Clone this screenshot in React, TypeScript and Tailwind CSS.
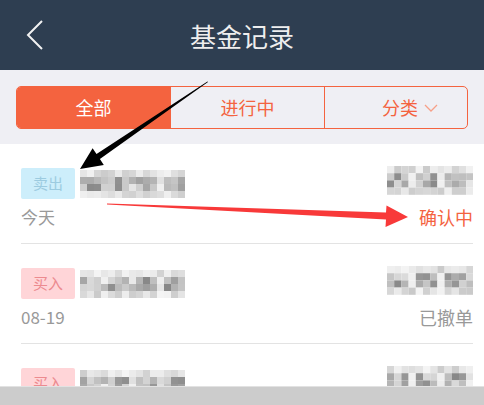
import React from 'react';

const font = { fontFamily: '"Noto Sans CJK SC", "Noto Sans", sans-serif' };

// simple seeded generator so the mosaic looks the same on every render
function makeRand(seed: number) {
  let s = seed;
  return () => {
    s = (s * 9301 + 49297) % 233280;
    return s / 233280;
  };
}

function Mosaic({ cols, rows, seed, cell = 7 }: { cols: number; rows: number; seed: number; cell?: number }) {
  const rand = makeRand(seed);
  const cells = [];
  for (let r = 0; r < rows; r++) {
    for (let c = 0; c < cols; c++) {
      const edge = r === 0 || r === rows - 1;
      const v = rand();
      let g = edge ? 200 + Math.floor(v * 45) : 135 + Math.floor(v * 85);
      if (c % 4 === 3 && !edge) g = Math.min(240, g + 40);
      cells.push(
        <rect key={`${r}-${c}`} x={c * cell} y={r * cell} width={cell} height={cell} fill={`rgb(${g},${g},${g})`} />
      );
    }
  }
  return (
    <svg width={cols * cell} height={rows * cell} className="block shrink-0">
      {cells}
    </svg>
  );
}

interface Record {
  type: 'sell' | 'buy';
  date: string;
  status: string;
  active?: boolean;
  seed: number;
}

const records: Record[] = [
  { type: 'sell', date: '今天', status: '确认中', active: true, seed: 11 },
  { type: 'buy', date: '08-19', status: '已撤单', seed: 37 },
  { type: 'buy', date: '08-18', status: '已撤单', seed: 73 },
];

function RecordRow({ r }: { r: Record }) {
  return (
    <div className="h-[100px] pt-[24px] border-b border-[#e3e3e3]">
      <div className="flex items-start justify-between">
        <div className="flex items-center gap-[5px]">
          {r.type === 'sell' ? (
            <span className="w-[54px] h-[31px] rounded-[2px] bg-[#cdeefb] text-[#9ccbe0] text-[15px] flex items-center justify-center">
              卖出
            </span>
          ) : (
            <span className="w-[54px] h-[31px] rounded-[2px] bg-[#ffd5d8] text-[#ec8a8f] text-[15px] flex items-center justify-center">
              买入
            </span>
          )}
          <Mosaic cols={15} rows={4} seed={r.seed} />
        </div>
        <div className="-mt-[2px]">
          <Mosaic cols={12} rows={4} seed={r.seed + 5} cell={7.2} />
        </div>
      </div>
      <div className="flex items-center justify-between mt-[6px] h-[24px]">
        <span className="text-[17px] text-[#999999]">{r.date}</span>
        <span className={r.active ? 'text-[18px] text-[#f4633f]' : 'text-[18px] text-[#999999]'}>{r.status}</span>
      </div>
    </div>
  );
}

export default function App() {
  return (
    <div className="w-[484px] h-[405px] overflow-hidden relative bg-white flex flex-col" style={font}>
      <div className="h-[70px] shrink-0 bg-[#2e3e51] grid grid-cols-[70px_1fr_70px] items-center">
        <div className="pl-[26px] flex items-center">
          <svg width="18" height="30" viewBox="0 0 18 30">
            <path d="M16 1 L2 15 L16 29" fill="none" stroke="#f2f2f2" strokeWidth="2" />
          </svg>
        </div>
        <h1 className="text-center text-[26px] text-[#eeeeee] font-normal">基金记录</h1>
        <div />
      </div>

      <div className="bg-[#efeff4] pt-[16px] pb-[15px] px-[16px] shrink-0">
        <div className="flex h-[43px] border border-[#f4633f] rounded-[5px] overflow-hidden text-[18px]">
          <div className="w-[153px] bg-[#f4633f] text-white flex items-center justify-center">全部</div>
          <div className="w-[154px] border-l border-[#f4633f] text-[#f4633f] flex items-center justify-center">进行中</div>
          <div className="flex-1 border-l border-[#f4633f] text-[#f4633f] flex items-center justify-center gap-[6px] pl-[28px]">
            <span>分类</span>
            <svg width="14" height="8" viewBox="0 0 14 8">
              <path d="M1 1 L7 7 L13 1" fill="none" stroke="#f7a088" strokeWidth="1.3" />
            </svg>
          </div>
        </div>
      </div>

      <div className="pl-[21px] pr-[11px] flex-1 overflow-hidden">
        {records.map((r, i) => (
          <RecordRow key={i} r={r} />
        ))}
      </div>

      <div className="h-[19px] shrink-0 bg-[#cccccc] border-t border-[#e2e2e2]" />

      <svg className="absolute inset-0 pointer-events-none" width="484" height="405">
        <polygon
          points="208,82 99.9,159.1 103.8,164.9 80,169 92.6,148.3 96.5,154.1 207.4,81.6"
          fill="#000000"
        />
        <polygon
          points="107,203.6 386,212.5 386.5,205.5 408,217 385.5,227 386,219.5 107,204.6"
          fill="#f83939"
        />
      </svg>
    </div>
  );
}
